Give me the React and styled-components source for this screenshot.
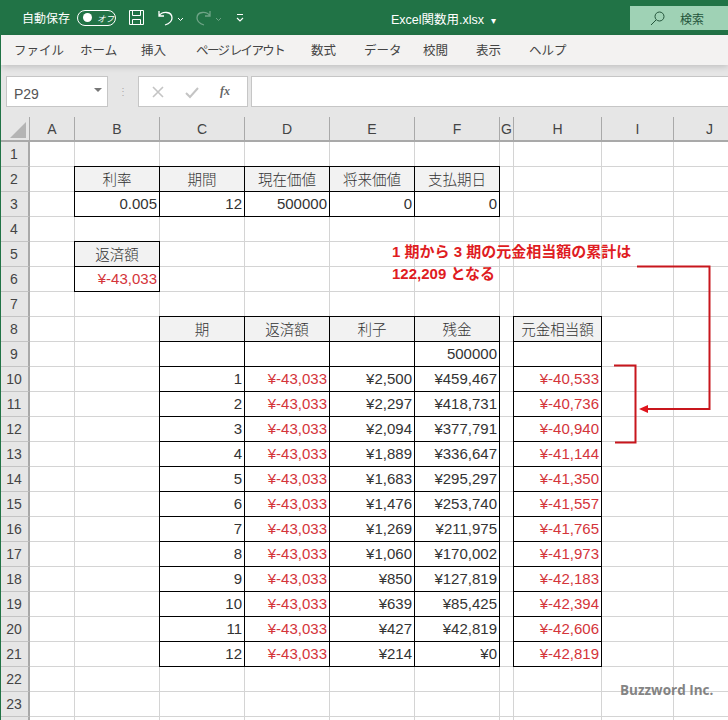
import React from "react";
import styled, { createGlobalStyle } from "styled-components";

const Global = createGlobalStyle`
  html, body { margin: 0; padding: 0; background: #fff; }
  body { width: 728px; height: 720px; overflow: hidden; font-family: "Liberation Sans", "Noto Sans CJK JP", sans-serif; font-feature-settings: "palt"; }
`;
const Page = styled.div`
  width: 728px; height: 720px; overflow: hidden; position: relative; border-left: 1px solid #217346; box-sizing: border-box;
`;
const TitleBar = styled.header`
  height: 35px; margin-left: -1px; background: #217346; color: #fff; display: flex; align-items: center; position: relative;
`;
const AutoSave = styled.span`
  margin-left: 22px; font: 12px "Noto Sans CJK JP", sans-serif; width: 55px; white-space: nowrap; font-feature-settings: normal;
`;
const Toggle = styled.span`
  height: 14px; border: 1px solid #fff; border-radius: 8px; display: flex; align-items: center; position: relative;
  font: italic 8.5px "Noto Sans CJK JP", sans-serif; padding-left: 19px; box-sizing: content-box; width: 18px;
  &::before { content: ""; position: absolute; left: 5px; top: 2.5px; width: 9px; height: 9px; border-radius: 50%; background: #fff; }
`;
const IconSlot = styled.span`
  display: flex; align-items: center; margin-left: ${p => p.$gap}px; opacity: ${p => p.$dim ? 0.35 : 1};
`;
const FileName = styled.span`
  position: absolute; left: 391px; top: 9px; font: 12.5px "Liberation Sans", "Noto Sans CJK JP", sans-serif; white-space: nowrap; font-feature-settings: normal;
`;
const Search = styled.div`
  position: absolute; right: 0; top: 6px; width: 98px; height: 24px; background: #9fd2b5; color: #24553b; display: flex; align-items: center;
  font: 12px "Noto Sans CJK JP", sans-serif; gap: 15px; padding-left: 20px; box-sizing: border-box; font-feature-settings: normal;
`;
const Tabs = styled.nav`
  height: 30px; background: #f3f2f1; display: flex; align-items: center; color: #444; font: 12.5px "Noto Sans CJK JP", sans-serif;
  padding: 0 0 2px 13px; box-sizing: border-box; position: relative; box-shadow: 0 2px 6px rgba(0,0,0,.16);
`;
const Tab = styled.span`
  width: ${p => p.$w}px; white-space: nowrap; letter-spacing: ${p => p.$tight ? "-1.6px" : "0"};
`;
const FormulaBar = styled.div`
  height: 52px; background: #e6e6e6; display: flex; padding: 11px 0 0 5px; box-sizing: border-box; align-items: flex-start;
`;
const NameBox = styled.div`
  width: 102px; height: 31px; background: #fff; border: 1px solid #c6c6c6; box-sizing: border-box; display: flex; align-items: center;
  justify-content: space-between; padding: 4px 4px 0 7px; color: #555; font-size: 14px;
  &::after { content: ""; border: 4px solid transparent; border-top: 4px solid #777; margin-top: -3px; margin-right: 1px; }
`;
const Dots = styled.span`
  width: 30px; text-align: center; color: #aaa; font-size: 10px; line-height: 31px;
`;
const FxBox = styled.div`
  width: 110px; height: 31px; background: #fff; border: 1px solid #c6c6c6; box-sizing: border-box; display: flex; align-items: center; padding-left: 12px; gap: 19px;
`;
const FxText = styled.i`
  font: italic bold 12px "Liberation Serif", serif; color: #666; margin-left: 2px;
`;
const Input = styled.div`
  flex: 1; height: 31px; margin-left: 3px; background: #fff; border-top: 1px solid #c6c6c6; border-left: 1px solid #c6c6c6; border-bottom: 1px solid #c6c6c6; box-sizing: border-box;
`;
const Grid = styled.div`
  display: grid; margin-left: -1px;
  grid-template-columns: 30px 45px 85px 85px 85px 85px 85px 14px 88px 72px 72px;
  grid-template-rows: repeat(25, 25px);
  background: #fff;
`;
const Corner = styled.div`
  background: #e6e6e6; border-right: 1px solid #a9a9a9; border-bottom: 2px solid #a9a9a9; box-sizing: border-box; position: relative;
  &::after { content: ""; position: absolute; right: 3px; bottom: 2px; border-style: solid; border-width: 0 0 16px 16px; border-color: transparent transparent #b4b4b4 transparent; }
`;
const ColHead = styled.div`
  background: #e6e6e6; border-right: 1px solid #a9a9a9; border-bottom: 2px solid #a9a9a9; box-sizing: border-box; display: flex; align-items: center; justify-content: center;
  font-size: 14px; color: #444; overflow: hidden;
`;
const RowHead = styled.div`
  background: #e6e6e6; border-right: 2px solid #a9a9a9; border-bottom: 1px solid #c4c4c4; box-sizing: border-box; display: flex; align-items: center; justify-content: center;
  font-size: 14px; color: #444; padding-bottom: 1px;
`;
const Cell = styled.div`
  position: relative; box-sizing: border-box; border-right: 1px solid #d4d4d4; border-bottom: 1px solid #d4d4d4;
  display: flex; align-items: center; justify-content: ${p => p.$head ? "center" : "flex-end"}; padding: 0 ${p => p.$head ? 0 : 2}px 2px 0;
  background: ${p => p.$head ? "#f2f2f2" : "#fff"}; color: ${p => p.$red ? "#d4343a" : "#333"}; font-size: 15px; white-space: nowrap;
  ${p => p.$head ? 'font-family: "Noto Sans CJK JP", sans-serif; font-size: 14.5px; font-weight: 300; font-feature-settings: normal; color:#333;' : ""}
  ${p => p.$box ? `&::after { content: ""; position: absolute; inset: -1px; border: 1px solid #000; z-index: 1; pointer-events: none; }` : ""}
`;
const Note = styled.div`
  position: absolute; left: 391px; top: 241px; color: #df1c22; font: bold 15px/22px "Liberation Sans", "Noto Sans CJK JP", sans-serif; white-space: pre; z-index: 2; font-feature-settings: normal;
`;
const Arrows = styled.svg`
  position: absolute; left: 0; top: 0; z-index: 2; pointer-events: none;
`;
const Watermark = styled.div`
  position: absolute; left: 619px; top: 681px; color: #777; font: bold 13.5px "Open Sans", sans-serif; white-space: nowrap; z-index: 2; opacity: .9;
`;

const cols = ["A","B","C","D","E","F","G","H","I","J"];
const amort = [
  ["2,500","459,467","-40,533"],["2,297","418,731","-40,736"],["2,094","377,791","-40,940"],["1,889","336,647","-41,144"],
  ["1,683","295,297","-41,350"],["1,476","253,740","-41,557"],["1,269","211,975","-41,765"],["1,060","170,002","-41,973"],
  ["850","127,819","-42,183"],["639","85,425","-42,394"],["427","42,819","-42,606"],["214","0","-42,819"],
];
const sheet = {};
const put = (r, c, text, o = {}) => { sheet[`${r}${c}`] = { text, ...o }; };
["利率","期間","現在価値","将来価値","支払期日"].forEach((t, i) => put(2, "BCDEF"[i], t, { $head: true, $box: true }));
["0.005","12","500000","0","0"].forEach((t, i) => put(3, "BCDEF"[i], t, { $box: true }));
put(5, "B", "返済額", { $head: true, $box: true });
put(6, "B", "¥-43,033", { $box: true, $red: true });
["期","返済額","利子","残金"].forEach((t, i) => put(8, "CDEF"[i], t, { $head: true, $box: true }));
put(8, "H", "元金相当額", { $head: true, $box: true });
["C","D","E"].forEach(c => put(9, c, "", { $box: true }));
put(9, "F", "500000", { $box: true });
put(9, "H", "", { $box: true });
amort.forEach((a, i) => {
  const r = 10 + i;
  put(r, "C", String(i + 1), { $box: true });
  put(r, "D", "¥-43,033", { $box: true, $red: true });
  put(r, "E", "¥" + a[0], { $box: true });
  put(r, "F", "¥" + a[1], { $box: true });
  put(r, "H", "¥" + a[2], { $box: true, $red: true });
});

const tabs = [["ファイル",66],["ホーム",61],["挿入",55],["ページ レイアウト",115,true],["数式",53],["データ",59],["校閲",53],["表示",53],["ヘルプ",60]];

export default function App() {
  const rows = Array.from({ length: 24 }, (_, i) => i + 1);
  return (
    <Page>
      <Global />
      <TitleBar>
        <AutoSave>自動保存</AutoSave>
        <Toggle>オフ</Toggle>
        <IconSlot $gap={12}>
          <svg width="17" height="17" viewBox="0 0 17 17" fill="none" stroke="#fff" strokeWidth="1"><path d="M1.5 1.5h14v14h-14z"/><path d="M4.5 1.5v5h8v-5M4.5 15.5v-5h8v5"/></svg>
        </IconSlot>
        <IconSlot $gap={12}>
          <svg width="30" height="18" viewBox="0 0 30 18" fill="none" stroke="#fff" strokeWidth="1.3"><path d="M2 2v5h5M2 7c3-5 13-5 13 2c0 4-4 6-7 7"/><path d="M21 9l2.5 2.5L26 9" strokeWidth="1"/></svg>
        </IconSlot>
        <IconSlot $gap={8} $dim>
          <svg width="30" height="18" viewBox="0 0 30 18" fill="none" stroke="#fff" strokeWidth="1.3"><path d="M15 2v5h-5M15 7C12 2 2 2 2 9c0 4 4 6 7 7"/><path d="M21 9l2.5 2.5L26 9" strokeWidth="1"/></svg>
        </IconSlot>
        <IconSlot $gap={10}>
          <svg width="10" height="10" viewBox="0 0 10 10" fill="none" stroke="#fff"><path d="M2 1.5h6" /><path d="M2 5l3 3 3-3" strokeWidth="1.1"/></svg>
        </IconSlot>
        <FileName>Excel関数用.xlsx &nbsp;<small>▾</small></FileName>
        <Search>
          <svg width="15" height="15" viewBox="0 0 15 15" fill="none" stroke="#24553b"><circle cx="9.5" cy="5.5" r="4.5"/><path d="M6 9l-5 5"/></svg>
          検索
        </Search>
      </TitleBar>
      <Tabs>{tabs.map(([t, w, tight]) => <Tab key={t} $w={w} $tight={tight}>{t}</Tab>)}</Tabs>
      <FormulaBar>
        <NameBox>P29</NameBox>
        <Dots>⋮</Dots>
        <FxBox>
          <svg width="14" height="14" viewBox="0 0 14 14" stroke="#c4c4c4" strokeWidth="1.6"><path d="M2 2l10 10M12 2L2 12"/></svg>
          <svg width="15" height="14" viewBox="0 0 15 14" fill="none" stroke="#c4c4c4" strokeWidth="2"><path d="M2 8l4 4 8-9"/></svg>
          <FxText>fx</FxText>
        </FxBox>
        <Input />
      </FormulaBar>
      <Grid>
        <Corner />
        {cols.map(c => <ColHead key={c}>{c}</ColHead>)}
        {rows.map(r => (
          <React.Fragment key={r}>
            <RowHead>{r < 24 ? r : ""}</RowHead>
            {cols.map(c => {
              const d = sheet[`${r}${c}`];
              const { text, ...rest } = d || {};
              return <Cell key={c} {...rest}>{text}</Cell>;
            })}
          </React.Fragment>
        ))}
      </Grid>
      <Note>{"1 期から 3 期の元金相当額の累計は\n122,209 となる"}</Note>
      <Arrows width="728" height="720" viewBox="0 0 728 720" fill="none">
        <path d="M636 266.5H708.5V409H645" stroke="#c8161d" strokeWidth="2"/>
        <path d="M638 409l9-4v8z" fill="#e0141c"/>
        <path d="M613 365.5H634.5V442.5H614" stroke="#c8161d" strokeWidth="2"/>
      </Arrows>
      <Watermark>Buzzword Inc.</Watermark>
    </Page>
  );
}
